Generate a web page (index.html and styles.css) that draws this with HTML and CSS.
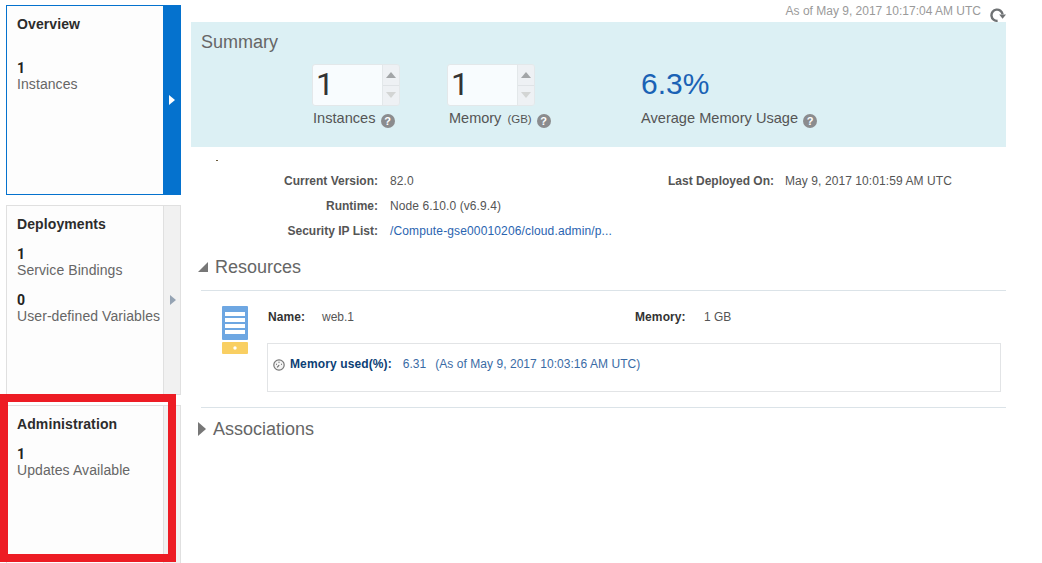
FILE: index.html
```html
<!DOCTYPE html>
<html lang="en">
<head>
<meta charset="utf-8">
<title>Application Overview</title>
<link rel="stylesheet" href="styles.css">
</head>
<body>
<div class="page">
  <aside class="sidebar">
    <section class="card card-active">
      <div class="card-body">
        <h2 class="card-title">Overview</h2>
        <div class="stat stat-first-wide"><b>1</b><span>Instances</span></div>
      </div>
      <div class="rail rail-active"><i class="rail-arrow"></i></div>
    </section>
    <section class="card">
      <div class="card-body">
        <h2 class="card-title">Deployments</h2>
        <div class="stat"><b>1</b><span>Service Bindings</span></div>
        <div class="stat"><b>0</b><span>User-defined Variables</span></div>
      </div>
      <div class="rail"><i class="rail-arrow"></i></div>
    </section>
    <section class="card">
      <div class="card-body">
        <h2 class="card-title">Administration</h2>
        <div class="stat"><b>1</b><span>Updates Available</span></div>
      </div>
      <div class="rail"></div>
    </section>
  </aside>

  <main class="main">
    <div class="timestamp">
      <span>As of May 9, 2017 10:17:04 AM UTC</span>
      <svg class="refresh" width="16" height="14" viewBox="0 0 16 14" aria-hidden="true">
        <path d="M12.6 6.4A5.6 5.6 0 1 0 7.6 12.8" fill="none" stroke="#6f7274" stroke-width="2.4"/>
        <path d="M9.2 6.4H16l-3.4 4.4z" fill="#6f7274"/>
      </svg>
    </div>

    <section class="summary">
      <h2 class="summary-title">Summary</h2>
      <div class="metrics">
        <div class="metric metric-instances">
          <div class="spinner">
            <div class="spinner-value">1</div>
            <div class="spinner-buttons">
              <div class="spin-btn"><i class="tri-up"></i></div>
              <div class="spin-btn"><i class="tri-down"></i></div>
            </div>
          </div>
          <div class="metric-label">Instances <span class="help">?</span></div>
        </div>
        <div class="metric metric-memory">
          <div class="spinner">
            <div class="spinner-value">1</div>
            <div class="spinner-buttons">
              <div class="spin-btn"><i class="tri-up"></i></div>
              <div class="spin-btn"><i class="tri-down"></i></div>
            </div>
          </div>
          <div class="metric-label metric-label-mem">Memory <small>(GB)</small> <span class="help">?</span></div>
        </div>
        <div class="metric">
          <div class="big-number">6.3%</div>
          <div class="metric-label">Average Memory Usage <span class="help">?</span></div>
        </div>
      </div>
    </section>

    <div class="speck"></div>

    <div class="details">
      <div class="dt">Current Version:</div><div class="dd">82.0</div>
      <div class="dt">Last Deployed On:</div><div class="dd">May 9, 2017 10:01:59 AM UTC</div>
      <div class="dt">Runtime:</div><div class="dd span-rest">Node 6.10.0 (v6.9.4)</div>
      <div class="dt">Security IP List:</div><a class="dd link span-rest" href="#">/Compute-gse00010206/cloud.admin/p...</a>
    </div>

    <div class="section-head">
      <i class="tri-open"></i>
      <h2 class="section-title">Resources</h2>
    </div>
    <div class="resources">
      <svg class="server" width="26" height="48" viewBox="0 0 26 48" aria-hidden="true">
        <rect width="26" height="34" rx="1" fill="#6ea7e2"/>
        <rect x="3" y="6" width="20" height="4" fill="#fff"/>
        <rect x="3" y="12" width="20" height="4" fill="#fff"/>
        <rect x="3" y="18" width="20" height="4" fill="#fff"/>
        <rect x="3" y="24" width="20" height="4" fill="#fff"/>
        <rect y="36" width="26" height="12" rx="1" fill="#f9cf62"/>
        <circle cx="13" cy="42" r="1.7" fill="#fff"/>
      </svg>
      <div class="resource-info">
        <div class="resource-row">
          <b class="res-name-label">Name:</b><span class="res-name">web.1</span>
          <b class="res-mem-label">Memory:</b><span>1 GB</span>
        </div>
        <div class="usage-box">
          <svg class="gauge" width="12" height="12" viewBox="0 0 12 12" aria-hidden="true">
            <circle cx="6" cy="6" r="5.2" fill="#f4f4f4" stroke="#777" stroke-width="1.2"/>
            <path d="M3 5.2h1M5.4 3.2h1.2M8 5.2h1M4.2 8.4l2-2.4" fill="none" stroke="#666" stroke-width="1.1"/>
          </svg>
          <b class="usage-label">Memory used(%):</b>
          <span class="usage-value">6.31</span>
          <span class="usage-value usage-note">(As of May 9, 2017 10:03:16 AM UTC)</span>
        </div>
      </div>
    </div>

    <div class="section-head section-head-closed">
      <i class="tri-closed"></i>
      <h2 class="section-title">Associations</h2>
    </div>
  </main>
</div>
<div class="highlight"></div>
</body>
</html>
```
FILE: styles.css
```css
html, body {
  margin: 0;
  padding: 0;
  height: 563px;
  overflow: hidden;
  background: #fff;
  font-family: "Liberation Sans", Arial, sans-serif;
  color: #444;
}

.page {
  display: flex;
  align-items: flex-start;
  height: 563px;
  overflow: hidden;
}

/* Sidebar */
.sidebar {
  flex: none;
  width: 175px;
  margin: 5px 10px 0 6px;
  display: flex;
  flex-direction: column;
  gap: 10px;
}

.card {
  flex: none;
  display: flex;
  box-sizing: border-box;
  height: 190px;
  background: #fdfdfd;
  border: 1px solid #e0e0e0;
}

.card-active { border-color: #0572ce; }

.card-body {
  flex: 1;
  padding: 10px 0 0 10px;
  min-width: 0;
}

.card-title {
  margin: 0;
  font-size: 14px;
  line-height: 16px;
  font-weight: 700;
  letter-spacing: .1px;
  color: #2c2c2c;
}

.stat { margin-top: 14px; }
.stat-first-wide { margin-top: 28px; }

.stat b, .stat span {
  display: block;
  font-size: 14px;
  line-height: 16px;
  white-space: nowrap;
}

.stat b {
  font-family: Roboto, "Liberation Sans", sans-serif;
  color: #222;
}

.stat span {
  letter-spacing: .08px;
  color: #666;
}

.rail {
  flex: none;
  width: 16px;
  display: flex;
  align-items: center;
  justify-content: center;
  background: #f1f1f1;
  border-left: 1px solid #e0e0e0;
}

.rail-active {
  width: 17px;
  background: #0572ce;
  border-left: 0;
}

.rail-arrow {
  width: 0;
  height: 0;
  margin-left: 1px;
  border-left: 6px solid #95a3b3;
  border-top: 5px solid transparent;
  border-bottom: 5px solid transparent;
}

.rail-active .rail-arrow { border-left-color: #fff; }

/* Main */
.main {
  flex: none;
  width: 815px;
}

.timestamp {
  height: 22px;
  display: flex;
  align-items: flex-start;
  justify-content: flex-end;
  gap: 9px;
  font-size: 12px;
  line-height: 22px;
  color: #9a9a9a;
}

.refresh { margin-top: 8px; }

.summary {
  box-sizing: border-box;
  height: 125px;
  padding: 10px 10px 0;
  background: #dcf0f4;
}

.summary-title {
  margin: 0;
  font-size: 18px;
  line-height: 21px;
  font-weight: 400;
  color: #666;
}

.metrics {
  display: flex;
  margin-top: 11px;
  padding-left: 111px;
}

.metric { flex: none; }
.metric-instances { width: 135px; }
.metric-memory { width: 194px; }

.spinner {
  display: flex;
  width: 88px;
  height: 42px;
  box-sizing: border-box;
  border: 1px solid #e3e8ea;
  border-radius: 3px;
  background: #f8fcfe;
  overflow: hidden;
}

.spinner-value {
  flex: 1;
  padding-left: 3px;
  font-family: Roboto, "Liberation Sans", sans-serif;
  font-size: 32px;
  line-height: 39px;
  color: #333;
}

.spinner-buttons {
  flex: none;
  width: 16px;
  display: flex;
  flex-direction: column;
  gap: 1px;
  background: #dfe3e6;
  border-left: 1px solid #e3e8ea;
}

.spin-btn {
  flex: 1;
  display: flex;
  align-items: center;
  justify-content: center;
  background: #eef1f4;
}

.tri-up, .tri-down {
  width: 0;
  height: 0;
  border-left: 5px solid transparent;
  border-right: 5px solid transparent;
}

.tri-up { border-bottom: 6px solid #a2a5a7; }
.tri-down { border-top: 6px solid #d3d5d4; }

.metric-label {
  margin-top: 4px;
  padding-left: 1px;
  font-size: 14.6px;
  line-height: 17px;
  color: #555;
  white-space: nowrap;
}

.metric-label-mem { padding-left: 2px; font-size: 14.5px; }

.metric-label small {
  margin-left: 2px;
  font-size: 11.5px;
}

.help {
  display: inline-block;
  width: 14px;
  height: 14px;
  margin-left: 1px;
  border-radius: 50%;
  background: #8b8c8e;
  color: #fff;
  font-size: 11px;
  line-height: 14px;
  font-weight: 700;
  text-align: center;
  vertical-align: -2px;
}

.big-number {
  height: 42px;
  font-size: 30px;
  line-height: 40px;
  color: #1a62b5;
}

.big-number + .metric-label { padding-left: 0; }

.speck {
  width: 2px;
  height: 1px;
  margin: 13px 0 0 25px;
  background: #6b5a3a;
}

/* Details */
.details {
  display: grid;
  grid-template-columns: 187px 266px 105px 1fr;
  column-gap: 12px;
  grid-auto-rows: 25px;
  margin-top: 8px;
  font-size: 12px;
  line-height: 25px;
  color: #555;
}

.dt {
  font-weight: 700;
  text-align: right;
  white-space: nowrap;
  color: #555;
}

.dd { letter-spacing: .08px; }

.span-rest { grid-column: 2 / 5; }

.link {
  color: #2a64b0;
  text-decoration: none;
  letter-spacing: .14px;
}

/* Sections */
.section-head {
  display: flex;
  align-items: center;
  height: 30px;
  margin-top: 8px;
  padding-left: 7px;
  gap: 7px;
}

.section-title {
  margin: 0;
  font-size: 18px;
  line-height: 30px;
  font-weight: 400;
  color: #666;
}

.tri-open {
  width: 0;
  height: 0;
  border-left: 10px solid transparent;
  border-bottom: 10px solid #777;
}

.tri-closed {
  width: 0;
  height: 0;
  border-left: 8px solid #777;
  border-top: 7.5px solid transparent;
  border-bottom: 7.5px solid transparent;
}

.section-head-closed {
  height: 26px;
}

.resources {
  display: flex;
  margin: 8px 0 0 10px;
  padding: 15px 5px 15px 21px;
  border-top: 1px solid #dbe3e8;
  border-bottom: 1px solid #dbe3e8;
  gap: 19px;
}

.server { flex: none; }

.resource-info { flex: 1; }

.resource-row {
  display: flex;
  box-sizing: border-box;
  height: 21px;
  padding: 1px 0 0 1px;
  font-size: 12px;
  line-height: 21px;
  color: #555;
}

.resource-row b {
  letter-spacing: .1px;
  color: #333;
}

.res-name-label { width: 54px; }
.res-name { width: 313px; }
.res-mem-label { width: 69px; }

.usage-box {
  display: flex;
  align-items: flex-start;
  box-sizing: border-box;
  height: 49px;
  margin-top: 16px;
  padding: 11px 0 0 5px;
  border: 1px solid #e2e4e6;
  font-size: 12px;
  line-height: 18px;
}

.gauge { flex: none; margin: 4px 5px 0 0; }

.usage-label {
  color: #0d3f75;
  letter-spacing: .12px;
  margin-right: 11px;
}

.usage-value {
  color: #3a6ba5;
  margin-right: 9px;
}

.usage-note { letter-spacing: .05px; }

/* Annotation overlay */
.highlight {
  position: absolute;
  left: 0;
  top: 394px;
  width: 160px;
  height: 152px;
  border: 8px solid #ed1c24;
}
```
